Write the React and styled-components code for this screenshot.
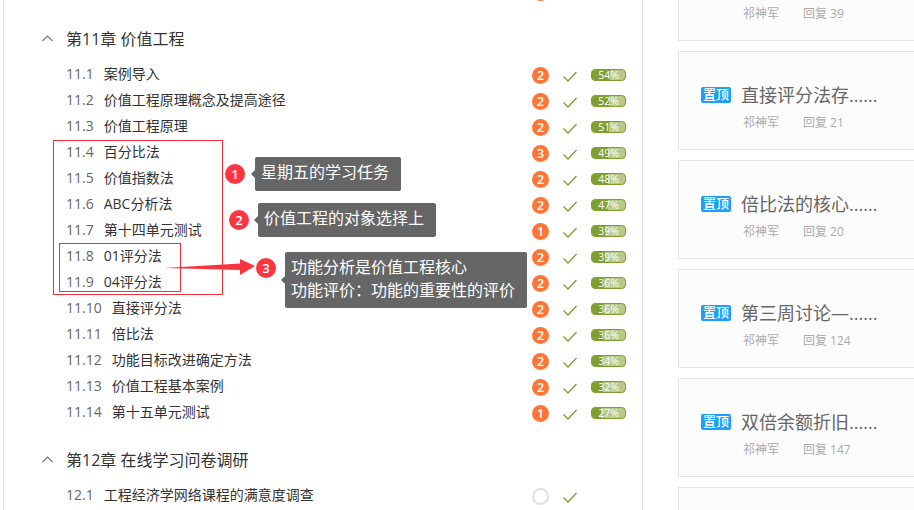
import React from "react";
import styled, { createGlobalStyle } from "styled-components";

const GlobalStyle = createGlobalStyle`
  html, body {
    margin: 0;
    padding: 0;
    background: #fff;
  }
  body {
    font-family: "Open Sans", "Noto Sans CJK SC", sans-serif;
  }
`;

const Page = styled.div`
  position: relative;
  display: flex;
  align-items: flex-start;
  width: 914px;
  height: 510px;
  overflow: hidden;
`;

const Lessons = styled.main`
  flex: none;
  box-sizing: border-box;
  width: 640px;
  height: 560px;
  margin: -21px 0 0 3px;
  padding-right: 16px;
  border-left: 1px solid #e2e2e2;
  border-right: 1px solid #e2e2e2;
`;

const Chapter = styled.h2`
  display: flex;
  align-items: center;
  height: 30px;
  margin: 18px 0 9px;
  padding-left: 38px;
  font-size: 16px;
  font-weight: 400;
  color: #333;
  svg {
    margin-right: 13px;
  }
`;

const Row = styled.div`
  display: flex;
  align-items: center;
  height: 26px;
  padding-left: 62px;
  font-size: 14px;
  color: #333;
`;

const Name = styled.div`
  display: flex;
  align-items: center;
  padding-bottom: 4px;
`;

const Num = styled.span`
  margin-right: 10px;
  font-size: 14px;
  color: #666;
`;

const Status = styled.div`
  display: flex;
  align-items: center;
  margin-left: auto;
`;

const Badge = styled.span`
  box-sizing: border-box;
  display: flex;
  align-items: center;
  justify-content: center;
  width: 17px;
  height: 17px;
  border-radius: 50%;
  font-size: 13px;
  font-weight: 600;
  color: #fff;
  background: ${(p) => (p.$empty ? "#fff" : "#ff7537")};
  border: ${(p) => (p.$empty ? "2px solid #e0e0e0" : "none")};
`;

const Check = styled.svg`
  width: 14px;
  height: 11px;
  margin: 2px 14px 0 14px;
`;

const Pill = styled.div`
  position: relative;
  box-sizing: border-box;
  width: 35px;
  height: 12px;
  border: 1px solid #7fa02f;
  border-radius: 4px;
  background: #b7ca8c;
  text-align: center;
  font-size: 10.5px;
  line-height: 10px;
  color: #fff;
`;

const PillFill = styled.div`
  position: absolute;
  left: 0;
  top: 0;
  bottom: 0;
  border-radius: 3px 0 0 3px;
  background: #7fa02f;
`;

const PillText = styled.span`
  position: relative;
`;

const PillSlot = styled.div`
  width: 35px;
`;

const Topics = styled.aside`
  flex: none;
  display: flex;
  flex-direction: column;
  gap: 10px;
  width: 240px;
  margin: -58px 0 0 35px;
`;

const Topic = styled.article`
  box-sizing: border-box;
  height: 99px;
  padding: 31px 0 0 22px;
  background: #fcfcfc;
  border: 1.5px solid #e4e4e4;
`;

const TitleLine = styled.div`
  display: flex;
  align-items: center;
  height: 24px;
`;

const Tag = styled.span`
  flex: none;
  width: 30px;
  height: 16px;
  margin-right: 10px;
  border-radius: 2px;
  background: #1a9eff;
  color: #fff;
  font-size: 13px;
  line-height: 15px;
  font-weight: 500;
  text-align: center;
  white-space: nowrap;
`;

const Title = styled.span`
  padding-bottom: 3px;
  font-size: 18px;
  color: #666;
  white-space: nowrap;
`;

const Meta = styled.div`
  display: flex;
  margin: 6px 0 0 42px;
  font-size: 12px;
  line-height: 20px;
  color: #aaa;
  span:first-child {
    width: 60px;
  }
`;

const Frame = styled.div`
  position: absolute;
  box-sizing: border-box;
  left: ${(p) => p.$x}px;
  top: ${(p) => p.$y}px;
  width: ${(p) => p.$w}px;
  height: ${(p) => p.$h}px;
  border: 1px solid #f0313a;
`;

const Dot = styled.span`
  position: absolute;
  left: ${(p) => p.$x - 10}px;
  top: ${(p) => p.$y - 10}px;
  display: flex;
  align-items: center;
  justify-content: center;
  width: 20px;
  height: 20px;
  border-radius: 50%;
  background: #fb3640;
  color: #fff;
  font-size: 13px;
  font-weight: 600;
`;

const Note = styled.div`
  position: absolute;
  box-sizing: border-box;
  left: ${(p) => p.$x}px;
  top: ${(p) => p.$y}px;
  width: ${(p) => p.$w}px;
  height: ${(p) => p.$h}px;
  padding: 0 6px 3px;
  border-radius: 2px;
  background: #666;
  color: #fff;
  font-size: 16px;
  line-height: 23px;
  display: flex;
  flex-direction: column;
  justify-content: center;
  white-space: nowrap;
  &::before {
    content: "";
    position: absolute;
    left: -4px;
    top: 50%;
    margin-top: -4px;
    border-style: solid;
    border-width: 4px 4px 4px 0;
    border-color: transparent #666 transparent transparent;
  }
`;

const Arrow = styled.svg`
  position: absolute;
  left: 160px;
  top: 255px;
  width: 100px;
  height: 24px;
`;

const chapter11 = [
  ["11.1", "案例导入", 2, 54],
  ["11.2", "价值工程原理概念及提高途径", 2, 52],
  ["11.3", "价值工程原理", 2, 51],
  ["11.4", "百分比法", 3, 49],
  ["11.5", "价值指数法", 2, 48],
  ["11.6", "ABC分析法", 2, 47],
  ["11.7", "第十四单元测试", 1, 39],
  ["11.8", "01评分法", 2, 39],
  ["11.9", "04评分法", 2, 36],
  ["11.10", "直接评分法", 2, 36],
  ["11.11", "倍比法", 2, 36],
  ["11.12", "功能目标改进确定方法", 2, 34],
  ["11.13", "价值工程基本案例", 2, 32],
  ["11.14", "第十五单元测试", 1, 27],
];

const topics = [
  ["", "祁神军", "回复 39"],
  ["直接评分法存......", "祁神军", "回复 21"],
  ["倍比法的核心......", "祁神军", "回复 20"],
  ["第三周讨论—......", "祁神军", "回复 124"],
  ["双倍余额折旧......", "祁神军", "回复 147"],
  ["", "", ""],
];

function Chevron() {
  return (
    <svg width="11" height="7" viewBox="0 0 11 7" fill="none">
      <path d="M0.5 6L5.5 1L10.5 6" stroke="#777" strokeWidth="1.1" />
    </svg>
  );
}

function Lesson({ num, title, count, pct }) {
  return (
    <Row>
      <Name>
        <Num>{num}</Num>
        {title}
      </Name>
      <Status>
        <Badge $empty={count === 0}>{count || ""}</Badge>
        <Check viewBox="0 0 14 11" fill="none">
          <path d="M0.5 5.5L5 10L13.5 1" stroke="#7f9f35" strokeWidth="1.3" />
        </Check>
        {pct ? (
          <Pill>
            <PillFill style={{ width: `${pct}%` }} />
            <PillText>{pct}%</PillText>
          </Pill>
        ) : (
          <PillSlot />
        )}
      </Status>
    </Row>
  );
}

export default function App() {
  return (
    <Page>
      <GlobalStyle />
      <Lessons>
        <Row>
          <Status>
            <Badge />
            <Check />
            <PillSlot />
          </Status>
        </Row>
        <Chapter>
          <Chevron />
          第11章 价值工程
        </Chapter>
        {chapter11.map(([num, title, count, pct]) => (
          <Lesson key={num} num={num} title={title} count={count} pct={pct} />
        ))}
        <Chapter>
          <Chevron />
          第12章 在线学习问卷调研
        </Chapter>
        <Lesson num="12.1" title="工程经济学网络课程的满意度调查" count={0} />
      </Lessons>

      <Topics>
        {topics.map(([title, author, replies], i) => (
          <Topic key={i}>
            <TitleLine>
              {title && <Tag>置顶</Tag>}
              {title && <Title>{title}</Title>}
            </TitleLine>
            <Meta>
              <span>{author}</span>
              <span>{replies}</span>
            </Meta>
          </Topic>
        ))}
      </Topics>

      <Frame $x={53} $y={140} $w={170} $h={155} />
      <Frame $x={59} $y={243} $w={122} $h={49} />
      <Arrow viewBox="0 0 100 24">
        <path d="M4 13L80 8.5L80 4L95 11L80 20L80 15Z" fill="#f8343e" />
      </Arrow>
      <Dot $x={235} $y={174}>1</Dot>
      <Dot $x={239} $y={220}>2</Dot>
      <Dot $x={266} $y={268}>3</Dot>
      <Note $x={255} $y={157} $w={146} $h={34}>星期五的学习任务</Note>
      <Note $x={258} $y={203} $w={178} $h={34}>价值工程的对象选择上</Note>
      <Note $x={285} $y={252} $w={242} $h={56}>
        <span>功能分析是价值工程核心</span>
        <span>功能评价：功能的重要性的评价</span>
      </Note>
    </Page>
  );
}
